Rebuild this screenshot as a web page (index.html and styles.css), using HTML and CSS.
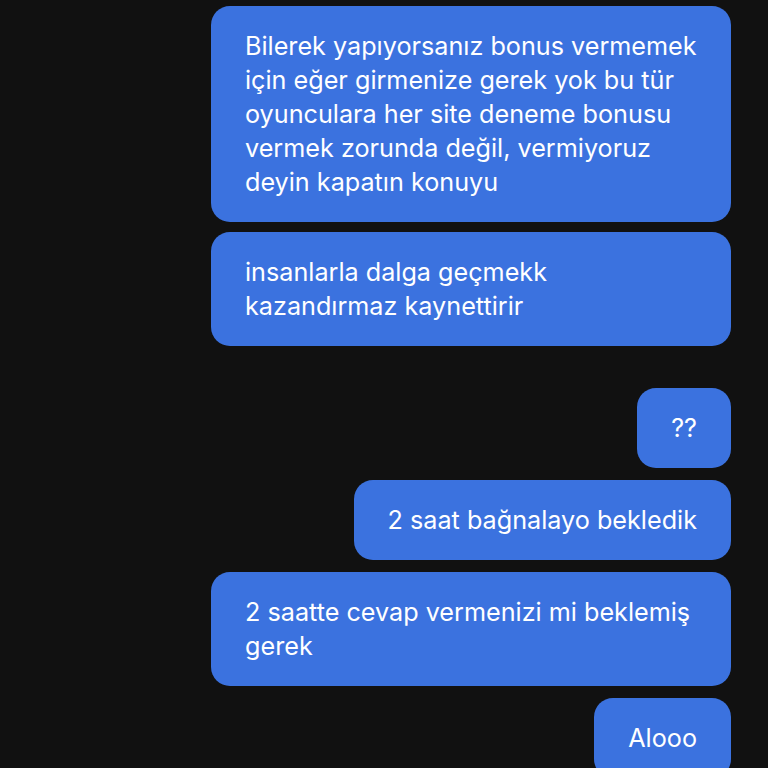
FILE: index.html
```html
<!DOCTYPE html>
<html lang="tr">
<head>
<meta charset="utf-8">
<title>Sohbet</title>
<link rel="stylesheet" href="styles.css">
</head>
<body>
<main class="thread">
  <div class="bubble multi">Bilerek yapıyorsanız bonus vermemek<br>için eğer girmenize gerek yok bu tür<br>oyunculara her site deneme bonusu<br>vermek zorunda değil, vermiyoruz<br>deyin kapatın konuyu</div>
  <div class="bubble multi first-after">insanlarla dalga geçmekk<br>kazandırmaz kaynettirir</div>
  <div class="bubble group-start">??</div>
  <div class="bubble">2 saat bağnalayo bekledik</div>
  <div class="bubble multi">2 saatte cevap vermenizi mi beklemiş<br>gerek</div>
  <div class="bubble">Alooo</div>
</main>
</body>
</html>
```
FILE: styles.css
```css
html, body {
  margin: 0;
  padding: 0;
  background: #111111;
  height: 100%;
  overflow: hidden;
}

.thread {
  display: flex;
  flex-direction: column;
  align-items: flex-end;
  gap: 12px;
  padding: 6px 37px 0 0;
  font-family: Inter, "Noto Sans", sans-serif;
  font-size: 25.2px;
  line-height: 34px;
  color: #ffffff;
}

.bubble {
  background: #3b72df;
  border-radius: 19px;
  padding: 23px 34px;
  white-space: nowrap;
  box-sizing: border-box;
}

.bubble.multi {
  width: 520px;
}

.bubble.first-after {
  margin-top: -2px;
}

.bubble.group-start {
  margin-top: 30px;
}
```
